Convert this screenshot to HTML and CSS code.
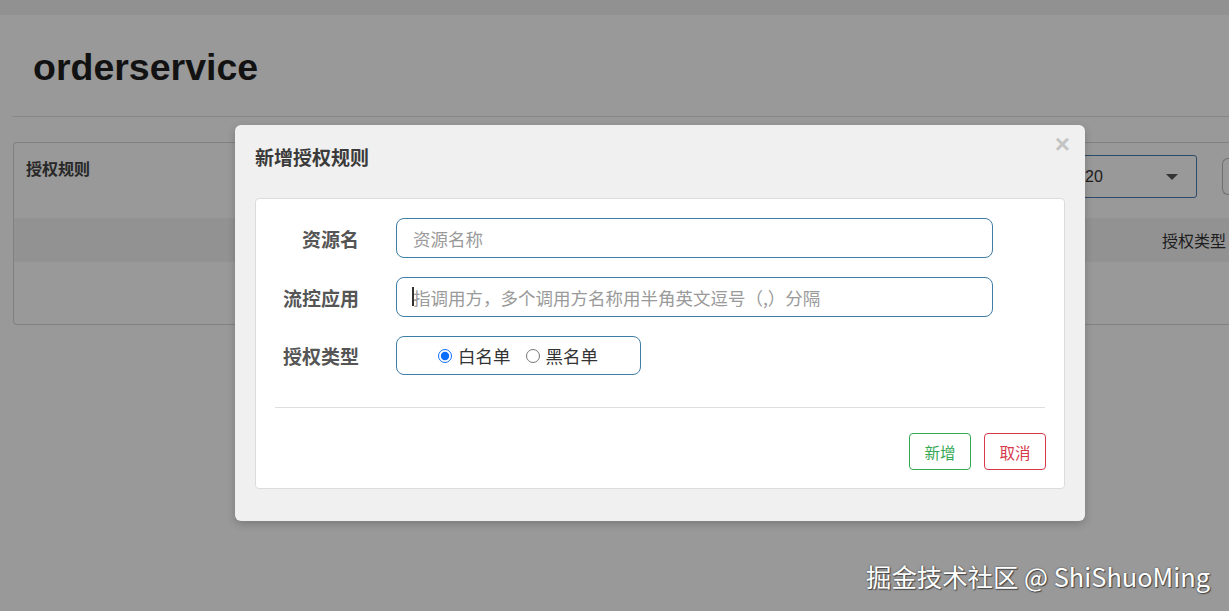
FILE: index.html
```html
<!DOCTYPE html>
<html lang="zh-CN">
<head>
<meta charset="utf-8">
<title>orderservice</title>
<link rel="stylesheet" href="styles.css">
</head>
<body>
<div class="page">
  <div class="topbar"></div>
  <main class="content">
    <h1 class="page-title">orderservice</h1>
    <hr class="page-rule">
    <section class="panel">
      <div class="panel-head">
        <span class="panel-title">授权规则</span>
        <div class="panel-tools">
          <div class="select-box"><span>20</span><span class="caret"></span></div>
          <div class="tool-btn"></div>
        </div>
      </div>
      <div class="table-head"><span class="th">授权类型</span></div>
      <div class="table-body"></div>
    </section>
  </main>
</div>

<div class="overlay"></div>

<div class="modal">
  <div class="modal-head">
    <h2 class="modal-title">新增授权规则</h2>
    <span class="modal-close">×</span>
  </div>
  <div class="modal-card">
    <form class="form">
      <label class="form-label">资源名</label>
      <input class="form-input" type="text" placeholder="资源名称">
      <label class="form-label">流控应用</label>
      <div class="input-wrap">
        <span class="cursor"></span>
        <input class="form-input" type="text" placeholder="指调用方，多个调用方名称用半角英文逗号（,）分隔">
      </div>
      <label class="form-label">授权类型</label>
      <div class="radio-box">
        <label class="radio"><input type="radio" name="t" checked><span>白名单</span></label>
        <label class="radio"><input type="radio" name="t"><span>黑名单</span></label>
      </div>
    </form>
    <hr class="card-rule">
    <div class="actions">
      <button class="btn btn-ok" type="button">新增</button>
      <button class="btn btn-cancel" type="button">取消</button>
    </div>
  </div>
</div>

<div class="watermark">掘金技术社区 @ ShiShuoMing</div>
</body>
</html>
```

FILE: styles.css
```css
* { box-sizing: border-box; }
html, body { margin: 0; padding: 0; }
body {
  width: 1229px;
  height: 611px;
  overflow: hidden;
  background: #fff;
  font-family: "Noto Sans CJK SC", "Liberation Sans", sans-serif;
  color: #333;
  position: relative;
}
.page { width: 1229px; }
.topbar { height: 15px; background: #f2f2f2; }
.content { padding: 0 0 0 12px; }
.page-title {
  margin: 0;
  padding: 29px 0 0 21px;
  height: 101px;
  font-family: "Liberation Sans", Arial, sans-serif;
  font-size: 37.5px;
  font-weight: bold;
  color: #1f1f1f;
  line-height: 46px;
}
.page-rule {
  margin: 0;
  border: 0;
  border-top: 1px solid #e2e2e2;
}
.panel {
  margin: 25px 0 0 1px;
  height: 183px;
  border: 1px solid #d8d8d8;
  border-right: 0;
  border-radius: 4px 0 0 4px;
  display: flex;
  flex-direction: column;
}
.panel-head {
  height: 75px;
  display: flex;
  justify-content: space-between;
  padding: 12px 0 0 12px;
}
.panel-title {
  font-size: 16px;
  font-weight: bold;
  color: #444;
  line-height: 27px;
}
.panel-tools { display: flex; gap: 25px; }
.select-box {
  width: 148px;
  height: 43px;
  border: 1px solid #4a7cb0;
  border-radius: 3px;
  display: flex;
  align-items: center;
  justify-content: space-between;
  padding: 0 18px 0 35px;
  font-family: "Liberation Sans", Arial, sans-serif;
  font-size: 16px;
  color: #333;
}
.caret {
  width: 0; height: 0;
  border-left: 6px solid transparent;
  border-right: 6px solid transparent;
  border-top: 6px solid #555;
}
.tool-btn {
  width: 7px;
  height: 37px;
  margin-top: 3px;
  border: 1px solid #bbb;
  border-right: 0;
  border-radius: 6px 0 0 6px;
}
.table-head {
  height: 44px;
  background: #f4f4f4;
  display: flex;
  align-items: center;
  justify-content: flex-end;
  padding-right: 3px;
}
.th { font-size: 16px; color: #333; }
.table-body { flex: 1; }

.overlay {
  position: absolute;
  inset: 0;
  background: rgba(0, 0, 0, 0.4);
}

.modal {
  position: absolute;
  left: 235px;
  top: 125px;
  width: 850px;
  height: 396px;
  background: #f0f0f0;
  border-radius: 6px;
  padding: 0 20px 32px 20px;
  box-shadow: 0 3px 9px rgba(0,0,0,0.2);
}
.modal-head {
  height: 73px;
  display: flex;
  justify-content: space-between;
  align-items: flex-start;
}
.modal-title {
  margin: 0;
  padding-top: 18px;
  font-size: 19px;
  line-height: 28px;
  font-weight: bold;
  color: #3a3a3a;
}
.modal-close {
  margin: 5px -5px 0 0;
  font-family: "Liberation Sans", Arial, sans-serif;
  font-size: 26px;
  font-weight: bold;
  color: #c4c4c4;
  line-height: 28px;
}
.modal-card {
  background: #fff;
  border: 1px solid #dcdcdc;
  border-radius: 4px;
  height: 291px;
  padding: 19px 18px 0 19px;
}
.form {
  display: grid;
  grid-template-columns: 84px 597px;
  column-gap: 37px;
  row-gap: 19px;
  align-items: center;
}
.form-label {
  text-align: right;
  font-size: 19px;
  font-weight: bold;
  color: #555;
}
.input-wrap { position: relative; }
.cursor {
  position: absolute;
  left: 16px;
  top: 10px;
  width: 2px;
  height: 19px;
  background: #333;
}
.form-input {
  width: 597px;
  height: 40px;
  border: 1px solid #3f7ca6;
  border-radius: 8px;
  padding: 0 16px;
  font-family: "Noto Sans CJK SC", sans-serif;
  font-size: 17.5px;
  color: #333;
  outline: none;
  background: #fff;
}
.form-input::placeholder { color: #9a9a9a; }
.radio-box {
  width: 245px;
  height: 39px;
  border: 1px solid #3f7ca6;
  border-radius: 8px;
  display: flex;
  align-items: center;
  gap: 15px;
  padding-left: 41px;
}
.radio {
  display: flex;
  align-items: center;
  gap: 6px;
  font-size: 17.5px;
  color: #333;
}
.radio input {
  margin: 0;
  width: 14px;
  height: 14px;
  accent-color: #0d6efd;
}
.card-rule {
  margin: 32px 1px 0 0;
  border: 0;
  border-top: 1px solid #dedede;
}
.actions {
  display: flex;
  justify-content: flex-end;
  gap: 13px;
  margin-top: 25px;
}
.btn {
  width: 62px;
  height: 37px;
  background: #fff;
  border-radius: 4px;
  font-family: "Noto Sans CJK SC", sans-serif;
  font-size: 15.5px;
  padding: 0;
}
.btn-ok { border: 1px solid #34a853; color: #34a853; }
.btn-cancel { border: 1px solid #d63a4a; color: #d63a4a; }

.watermark {
  position: absolute;
  left: 866px;
  top: 558px;
  font-family: "Noto Sans CJK SC", "Noto Sans", sans-serif;
  font-size: 25.4px;
  line-height: 36px;
  color: #fff;
  text-shadow: 1px 1px 1px #444, 0 0 2px rgba(0,0,0,0.5);
}
```
